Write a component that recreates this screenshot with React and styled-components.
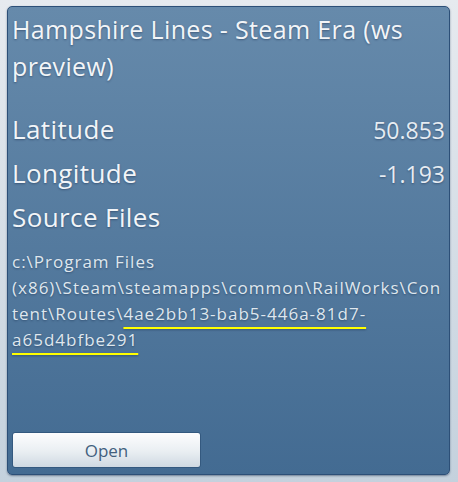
import React from 'react';
import styled, { createGlobalStyle } from 'styled-components';

const route = {
  name: 'Hampshire Lines - Steam Era (ws preview)',
  latitude: '50.853',
  longitude: '-1.193',
  folder: 'c:\\Program Files (x86)\\Steam\\steamapps\\common\\RailWorks\\Content\\Routes\\',
  guid: '4ae2bb13-bab5-446a-81d7-a65d4bfbe291',
};

const GlobalStyle = createGlobalStyle`
  html, body {
    margin: 0;
    padding: 0;
  }
  body {
    width: 458px;
    height: 482px;
    background: linear-gradient(#e6eaef, #c4d1dd);
    font-family: "Open Sans", "DejaVu Sans", sans-serif;
    overflow: hidden;
  }
`;

const Page = styled.div`
  padding: 6px 8px 7px 7px;
`;

const Panel = styled.section`
  box-sizing: border-box;
  height: 469px;
  display: flex;
  flex-direction: column;
  padding: 4px 4px 6px 4px;
  border: 1px solid #2c4f77;
  border-radius: 5px;
  background: linear-gradient(#668aab, #436b92);
  box-shadow: 0 1px 2px rgba(30, 50, 80, 0.5);
  color: #f2f5f8;
  text-shadow: 0 1px 2px rgba(20, 40, 70, 0.45);
`;

const Title = styled.h1`
  margin: 0 0 22px;
  font-size: 25px;
  font-weight: 400;
  line-height: 37px;
  letter-spacing: 0.35px;
`;

const Row = styled.div`
  display: flex;
  justify-content: space-between;
  align-items: baseline;
  height: 44px;
  line-height: 44px;
`;

const Label = styled.span`
  font-size: 26px;
  letter-spacing: 0.4px;
`;

const Value = styled.span`
  font-size: 23px;
  color: #e6ecf2;
`;

const Path = styled.p`
  margin: 10px 0 0;
  font-size: 17px;
  line-height: 26px;
  color: #dfe7ee;
  overflow-wrap: anywhere;
  letter-spacing: 1px;
`;

const Marked = styled.span`
  text-decoration: underline;
  text-decoration-color: #ffff00;
  text-decoration-thickness: 2px;
  text-underline-offset: 7px;
  text-decoration-skip-ink: none;
`;

const Spacer = styled.div`
  flex: 1;
`;

const Button = styled.button`
  width: 189px;
  height: 36px;
  border: 1px solid #34597f;
  border-radius: 3px;
  background: linear-gradient(#fdfdfe, #e9eef2 55%, #cfd9e2);
  color: #425f7e;
  font-family: "Open Sans", "DejaVu Sans", sans-serif;
  font-size: 17px;
  cursor: pointer;
`;

export default function App() {
  return (
    <Page>
      <GlobalStyle />
      <Panel>
        <Title>{route.name}</Title>
        <Row>
          <Label>Latitude</Label>
          <Value>{route.latitude}</Value>
        </Row>
        <Row>
          <Label>Longitude</Label>
          <Value>{route.longitude}</Value>
        </Row>
        <Row>
          <Label>Source Files</Label>
        </Row>
        <Path>
          {route.folder}
          <Marked>{route.guid}</Marked>
        </Path>
        <Spacer />
        <Button>Open</Button>
      </Panel>
    </Page>
  );
}
